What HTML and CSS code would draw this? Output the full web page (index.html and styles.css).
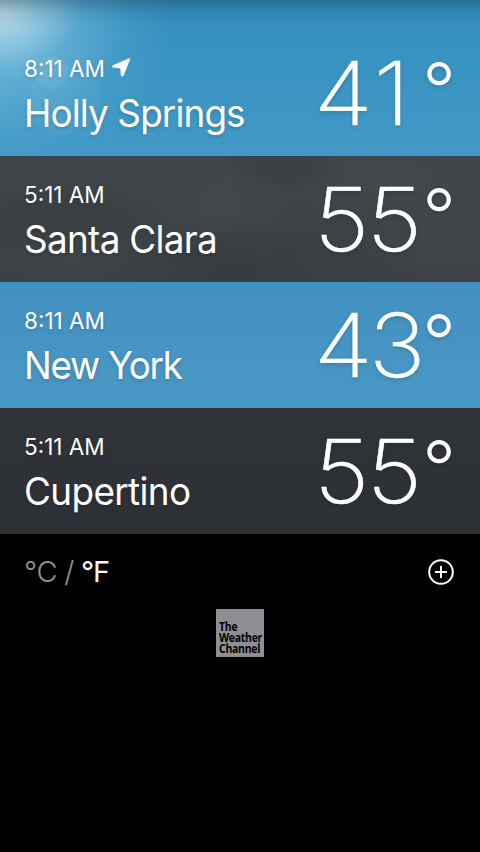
FILE: index.html
```html
<!DOCTYPE html>
<html lang="en">
<head>
<meta charset="utf-8">
<title>Weather</title>
<link rel="stylesheet" href="styles.css">
</head>
<body>
<main class="cities">
  <section class="city sunny">
    <div class="place">
      <div class="time">8:11 AM<svg class="arrow" width="18" height="19" viewBox="0 0 18 19"><path d="M17.2.4Q18.2.2 17.9 1.2L11.5 17.5Q10.2 19.2 9.1 17.4L8.5 10.2 1.3 9.4Q-.6 8.7.9 7.4Z" fill="#fff" stroke="#fff" stroke-width=".4"/></svg></div>
      <div class="name holly">Holly Springs</div>
    </div>
    <div class="temp"><span class="digits forty-one">41</span><span class="degree">°</span></div>
  </section>
  <section class="city cloudy">
    <div class="place">
      <div class="time">5:11 AM</div>
      <div class="name santa">Santa Clara</div>
    </div>
    <div class="temp"><span class="digits">55</span><span class="degree">°</span></div>
  </section>
  <section class="city clear">
    <div class="place">
      <div class="time">8:11 AM</div>
      <div class="name york">New York</div>
    </div>
    <div class="temp"><span class="digits forty-three">43</span><span class="degree">°</span></div>
  </section>
  <section class="city night">
    <div class="place">
      <div class="time">5:11 AM</div>
      <div class="name cupertino">Cupertino</div>
    </div>
    <div class="temp"><span class="digits">55</span><span class="degree">°</span></div>
  </section>
</main>
<footer class="footer">
  <div class="tools">
    <div class="units"><span>°C</span><span class="slash">/</span><span class="active">°F</span></div>
    <svg class="add" width="26" height="26" viewBox="0 0 26 26" fill="none" stroke="#fff" stroke-width="2"><circle cx="13" cy="13" r="11.8"/><path d="M13 7.8v10.4M7.8 13h10.4" stroke-linecap="round"/></svg>
  </div>
  <div class="channel"><div class="wordmark">The<br>Weather<br>Channel</div></div>
</footer>
</body>
</html>
```
FILE: styles.css
```css
* { box-sizing: border-box; }
body {
  margin: 0;
  background: #000;
  color: #fff;
  font-family: Inter, "Liberation Sans", sans-serif;
  overflow: hidden;
}
.city {
  height: 126px;
  padding: 0 24px;
  display: flex;
  justify-content: space-between;
  text-shadow: 0 2px 4px rgba(0, 0, 0, .15);
}
.sunny {
  height: 156px;
  padding-top: 30px;
  background:
    linear-gradient(rgba(20, 55, 75, .34), rgba(20, 55, 75, .1) 13px, rgba(20, 55, 75, 0) 28px),
    radial-gradient(circle at 52px 72px, rgba(255, 255, 255, .06) 14px, transparent 18px),
    radial-gradient(circle at 65px 98px, rgba(255, 255, 255, .03) 34px, transparent 38px),
    radial-gradient(ellipse 80px 60px at 0 10px, rgba(215, 220, 222, .6), rgba(215, 222, 225, .25) 50%, transparent),
    radial-gradient(ellipse 175px 160px at 0 15px, rgba(165, 222, 242, .8), rgba(150, 210, 236, .38) 42%, rgba(140, 205, 235, .1) 75%, transparent),
    linear-gradient(#338fbf, #4299c6);
}
.cloudy {
  background:
    radial-gradient(ellipse 70px 24px at 285px 12px, rgba(48, 53, 57, .4), transparent),
    radial-gradient(ellipse 75px 40px at 220px 45px, rgba(76, 80, 83, .4), transparent),
    radial-gradient(ellipse 90px 45px at 380px 20px, rgba(74, 79, 81, .45), transparent),
    radial-gradient(ellipse 100px 35px at 55px 65px, rgba(52, 58, 62, .55), transparent),
    radial-gradient(ellipse 120px 35px at 70px 105px, rgba(70, 75, 79, .3), transparent),
    radial-gradient(ellipse 140px 48px at 235px 115px, rgba(50, 56, 60, .6), transparent),
    radial-gradient(ellipse 90px 70px at 450px 75px, rgba(74, 77, 80, .45), transparent),
    linear-gradient(#3f4548, #3b4044);
}
.clear { background: linear-gradient(#4290c0, #4a98c5); }
.night { background: linear-gradient(#303338, #2d3035); }
.place { padding-top: 25px; }
.time {
  display: flex;
  align-items: center;
  height: 28px;
  font-size: 22.5px;
  line-height: 28px;
}
.arrow { margin: -3px 0 0 7px; }
.name {
  margin-top: 6px;
  font-size: 38px;
  line-height: 48px;
  white-space: nowrap;
  transform: scaleX(.97);
  transform-origin: left;
}
.holly { letter-spacing: -.9px; }
.santa { letter-spacing: -.7px; }
.york { letter-spacing: -1.35px; }
.cupertino { letter-spacing: -.65px; }
.temp { display: flex; }
.digits {
  width: 108px;
  padding-top: 10px;
  font-size: 88px;
  line-height: 106px;
  font-weight: 200;
  letter-spacing: -2.5px;
  -webkit-text-stroke: .5px #fff;
  transform: scaleX(1.09);
  transform-origin: left;
}
.forty-one { letter-spacing: 2px; }
.forty-three { letter-spacing: -3.5px; }
.degree {
  padding-top: 22px;
  font-size: 74px;
  line-height: 74px;
  font-weight: 300;
}
.footer {
  display: flex;
  flex-direction: column;
  align-items: center;
}
.tools {
  width: 100%;
  height: 75px;
  padding: 0 26px 0 24px;
  display: flex;
  align-items: center;
  justify-content: space-between;
}
.units {
  display: flex;
  font-size: 29px;
  line-height: 36px;
  font-weight: 300;
  letter-spacing: -.4px;
  color: #939395;
}
.slash { margin: 0 7px; }
.active { color: #fff; font-weight: 400; letter-spacing: -1px; }
.channel {
  width: 48px;
  height: 48px;
  padding: 12px 0 0 3px;
  background: #8f8e94;
  color: #000;
}
.wordmark {
  font: 700 11.5px/11px "Open Sans", sans-serif;
  letter-spacing: -.3px;
  transform: scaleX(.91);
  transform-origin: left;
}
```
